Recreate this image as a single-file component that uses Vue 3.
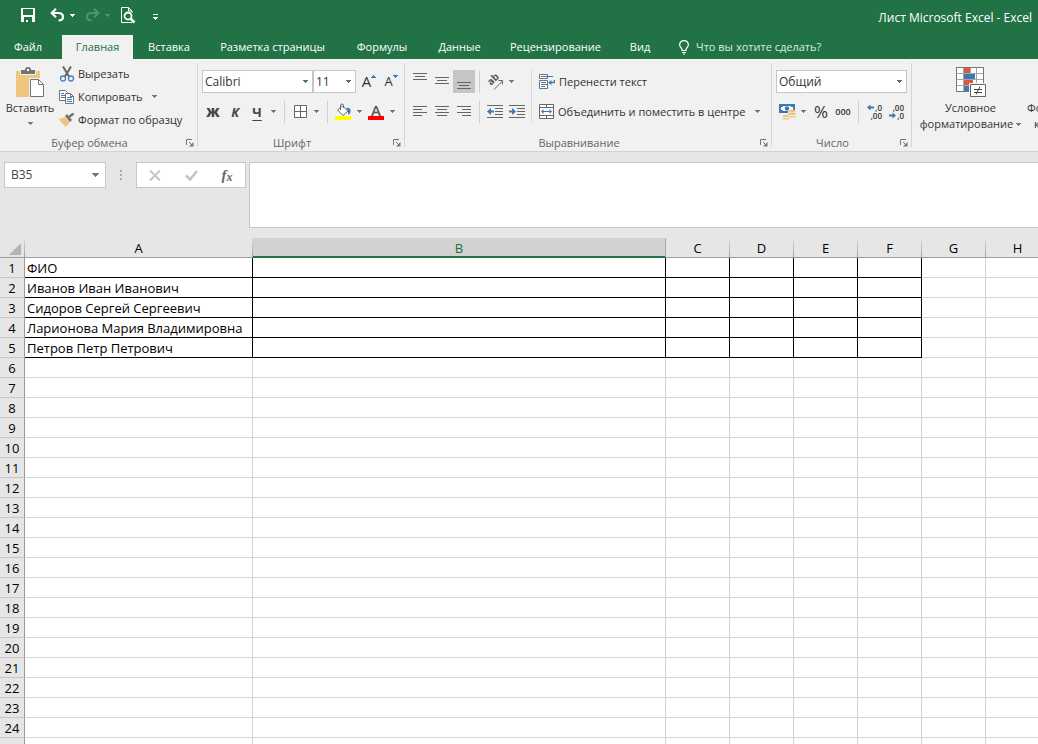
<script setup>
import { ref } from 'vue'

const tabs = ['Файл', 'Главная', 'Вставка', 'Разметка страницы', 'Формулы', 'Данные', 'Рецензирование', 'Вид']
const columns = ['A', 'B', 'C', 'D', 'E', 'F', 'G', 'H']
const names = ['ФИО', 'Иванов Иван Иванович', 'Сидоров Сергей Сергеевич', 'Ларионова Мария Владимировна', 'Петров Петр Петрович']
const caret = 'M0 0h5v1H4v1H3v1H2V2H1V1H0z'
const cellName = ref('B35')
const formula = ref('')
const activeTab = ref('Главная')
</script>

<template>
  <div class="app">
    <header class="top">
      <div class="titlebar">
        <div class="quick">
          <button class="q save" aria-label="Сохранить">
            <svg width="14" height="14" viewBox="0 0 14 14"><path d="M0 0h14v14H0z" fill="#fff" /><path d="M2 1h10v6H2zM3 9h8v5H7v-2H5v2H3z" fill="#217346" /></svg>
          </button>
          <button class="q undo" aria-label="Отменить">
            <svg width="15" height="14" viewBox="0 0 15 14"><path d="M1.500 5H8c3.500 0 5 1.800 5 3.800S11.500 12.500 8.500 12.500" fill="none" stroke="#fff" stroke-width="2.200" /><path d="M6 .8L1.700 5 6 9.200" fill="none" stroke="#fff" stroke-width="2.200" /></svg>
            <svg width="5" height="3"><path :d="caret" fill="#fff" /></svg>
          </button>
          <button class="q redo" aria-label="Повторить">
            <svg width="15" height="14" viewBox="0 0 15 14"><path d="M13.500 5H7C3.500 5 2 6.800 2 8.800s1.500 3.700 4.500 3.700" fill="none" stroke="#4f9370" stroke-width="2.200" /><path d="M9 .8L13.300 5 9 9.200" fill="none" stroke="#4f9370" stroke-width="2.200" /></svg>
            <svg width="5" height="3"><path :d="caret" fill="#4f9370" /></svg>
          </button>
          <button class="q preview" aria-label="Предварительный просмотр">
            <svg width="15" height="17" viewBox="0 0 15 17"><path d="M11 15.500H.5V.5h7L11 4v2M7.500.5V4H11" fill="none" stroke="#fff" /><circle cx="7" cy="9" r="3.500" fill="#217346" stroke="#fff" stroke-width="1.800" /><path d="M9.500 11.500l4 4" stroke="#fff" stroke-width="2.500" /></svg>
          </button>
          <button class="q more" aria-label="Настройка панели">
            <svg width="5" height="6"><path d="M0 0h5v1H0zM0 3h5v1H4v1H3v1H2V5H1V4H0z" fill="#fff" /></svg>
          </button>
        </div>
        <div class="title">Лист Microsoft Excel - Excel</div>
      </div>
      <nav class="tabs">
        <button v-for="t in tabs" :key="t" class="tab" :class="{ active: t === activeTab }" @click="activeTab = t">{{ t }}</button>
        <button class="tellme">
          <svg width="10" height="15" viewBox="0 0 10 15"><path d="M3 10.500V9.200C2.500 8 .6 7 .6 4.800A4.300 4.300 0 0 1 5 .6a4.300 4.300 0 0 1 4.400 4.200C9.400 7 7.500 8 7 9.200v1.300z" fill="none" stroke="#fff" stroke-width="1.200" /><path d="M3 12h4v1H3zM4 13.500h2v1H4z" fill="#fff" /></svg>
          Что вы хотите сделать?
        </button>
      </nav>
    </header>

    <section class="ribbon">
      <div class="group clipboard">
        <div class="body">
          <button class="big paste">
            <svg width="30" height="31" viewBox="0 0 30 31"><path d="M1 4h24v26H1z" fill="#eec77f" /><path d="M5 2.500h4a4 2.500 0 0 1 8 0h4V8H5z" fill="#f1f1f1" /><path d="M6 3h4a3 3 0 0 1 6 0h4v4H6z" fill="#737373" /><path d="M12 2h2v2h-2z" fill="#fff" /><path d="M14 11h10l6 6v14H14z" fill="#f1f1f1" /><path d="M15.500 12.500h8l5 5v12h-13z" fill="#fff" stroke="#737373" /><path d="M23.500 12.500v5h5" fill="none" stroke="#737373" /></svg>
            <span>Вставить</span>
            <svg class="caret" width="5" height="3"><path :d="caret" fill="#777" /></svg>
          </button>
          <div class="stack">
            <button>
              <svg width="16" height="16" viewBox="0 0 16 16"><path d="M4 .5l6 10M12 .5L6 10.500" stroke="#666" stroke-width="2" /><circle cx="4" cy="12.500" r="2.500" fill="none" stroke="#4a7fb8" stroke-width="1.300" /><circle cx="12" cy="12.500" r="2.500" fill="none" stroke="#4a7fb8" stroke-width="1.300" /></svg>
              Вырезать
            </button>
            <button>
              <svg width="16" height="14" viewBox="0 0 16 14"><path d="M.5.500h6l2 2v8h-8z" fill="#fff" stroke="#737373" /><path d="M2 3.500h3M2 5.500h4M2 7.500h4" stroke="#3e78b5" /><path d="M6.500 3.500h5l3 3v7h-8z" fill="#fff" stroke="#737373" /><path d="M11.500 3.500v3h3" fill="none" stroke="#737373" /><path d="M8 7.500h5M8 9.500h5M8 11.500h5" stroke="#3e78b5" /></svg>
              Копировать
              <svg class="caret" width="5" height="3"><path :d="caret" fill="#777" /></svg>
            </button>
            <button>
              <svg width="16" height="14" viewBox="0 0 16 14"><path d="M0 6l6-2 5 5-4 5C5 12 2 10 0 6z" fill="#eec77f" /><path d="M6 3l2-2 5 6-2 2z" fill="#737373" /><path d="M10 4l4.500-3.500" stroke="#737373" stroke-width="2.500" /></svg>
              Формат по образцу
            </button>
          </div>
        </div>
        <div class="caption">Буфер обмена</div>
        <button class="launch" aria-label="Параметры буфера"><svg width="8" height="8" viewBox="0 0 8 8"><path d="M.5 6V.5H6M3 3l3 3" fill="none" stroke="#777" /><path d="M7.500 3v4.500H3z" fill="#777" /></svg></button>
      </div>

      <div class="group font">
        <div class="body rows">
          <div class="row">
            <div class="combo family"><select aria-label="Шрифт"><option>Calibri</option></select><svg class="caret" width="5" height="3"><path :d="caret" fill="#666" /></svg></div>
            <div class="combo size"><select aria-label="Размер"><option>11</option></select><svg class="caret" width="5" height="3"><path :d="caret" fill="#666" /></svg></div>
            <button class="tool grow" aria-label="Увеличить размер"><span>A</span><svg width="5" height="3"><path d="M2 0h1v1h1v1h1v1H0V2h1V1h1z" fill="#3e78b5" /></svg></button>
            <button class="tool grow shrink" aria-label="Уменьшить размер"><span>A</span><svg width="5" height="3"><path :d="caret" fill="#3e78b5" /></svg></button>
          </div>
          <div class="row">
            <button class="tool bold">Ж</button>
            <button class="tool italic">К</button>
            <button class="tool under">Ч</button>
            <button class="drop" aria-label="Вид подчеркивания"><svg width="5" height="3"><path :d="caret" fill="#777" /></svg></button>
            <i class="sep"></i>
            <button class="tool" aria-label="Границы"><svg width="13" height="13" viewBox="0 0 13 13"><path d="M.5.500h12v12H.5zM6.500 1v11M1 6.500h11" fill="#fff" stroke="#666" /></svg></button>
            <button class="drop" aria-label="Вид границ"><svg width="5" height="3"><path :d="caret" fill="#777" /></svg></button>
            <i class="sep"></i>
            <button class="tool" aria-label="Цвет заливки"><svg width="16" height="17" viewBox="0 0 16 17"><path d="M7.500 3l5.500 5-5 4.500L2.500 7z" fill="#fff" stroke="#666" /><path d="M5.500 7V2.500a1.500 1.500 0 0 1 3 0V5" fill="none" stroke="#666" /><path d="M11 5c3-1 5 1 4.500 3.500S13.500 12 13 11V7z" fill="#3e78b5" /><path d="M0 13h16v4H0z" fill="#ff0" /></svg></button>
            <button class="drop" aria-label="Выбор заливки"><svg width="5" height="3"><path :d="caret" fill="#777" /></svg></button>
            <button class="tool color" aria-label="Цвет текста"><span>A</span></button>
            <button class="drop" aria-label="Выбор цвета"><svg width="5" height="3"><path :d="caret" fill="#777" /></svg></button>
          </div>
        </div>
        <div class="caption">Шрифт</div>
        <button class="launch" aria-label="Параметры шрифта"><svg width="8" height="8" viewBox="0 0 8 8"><path d="M.5 6V.5H6M3 3l3 3" fill="none" stroke="#777" /><path d="M7.500 3v4.500H3z" fill="#777" /></svg></button>
      </div>

      <div class="group align">
        <div class="body">
          <div class="rows">
            <div class="row">
              <button class="tool" aria-label="По верхнему краю"><svg width="14" height="17" viewBox="0 0 14 17"><path d="M0 .5h14M2 3.500h10M0 6.500h14" stroke="#666" /></svg></button>
              <button class="tool" aria-label="По середине"><svg width="14" height="17" viewBox="0 0 14 17"><path d="M0 4.500h14M2 7.500h10M0 10.500h14" stroke="#666" /></svg></button>
              <button class="tool pressed" aria-label="По нижнему краю"><svg width="14" height="17" viewBox="0 0 14 17"><path d="M0 9.500h14M2 12.500h10M0 15.500h14" stroke="#666" /></svg></button>
              <i class="sep near"></i>
              <button class="tool" aria-label="Ориентация"><svg class="orient" width="17" height="16" viewBox="0 0 17 16"><text x="0" y="0" transform="translate(4 12) rotate(-45)" class="ab">ab</text><path d="M7 15.500l8.500-8.500M11.500 6.500h4v4" fill="none" stroke="#666" /></svg></button>
              <button class="drop" aria-label="Выбор ориентации"><svg width="5" height="3"><path :d="caret" fill="#777" /></svg></button>
            </div>
            <div class="row">
              <button class="tool" aria-label="По левому краю"><svg width="14" height="11" viewBox="0 0 14 11"><path d="M0 .5h14M0 3.500h9M0 6.500h14M0 9.500h9" stroke="#666" /></svg></button>
              <button class="tool" aria-label="По центру"><svg width="14" height="11" viewBox="0 0 14 11"><path d="M0 .5h14M2 3.500h10M0 6.500h14M2 9.500h10" stroke="#666" /></svg></button>
              <button class="tool" aria-label="По правому краю"><svg width="14" height="11" viewBox="0 0 14 11"><path d="M0 .5h14M5 3.500h9M0 6.500h14M5 9.500h9" stroke="#666" /></svg></button>
              <i class="sep near"></i>
              <button class="tool" aria-label="Уменьшить отступ"><svg width="16" height="13" viewBox="0 0 16 13"><path d="M0 .5h16M8 3.500h8M8 6.500h8M8 9.500h8M0 12.500h16" stroke="#666" /><path d="M0 6.500L4 3v2.500h3v2H4V10z" fill="#3e78b5" /></svg></button>
              <button class="tool" aria-label="Увеличить отступ"><svg width="16" height="13" viewBox="0 0 16 13"><path d="M0 .5h16M8 3.500h8M8 6.500h8M8 9.500h8M0 12.500h16" stroke="#666" /><path d="M7 6.500L3 3v2.500H0v2h3V10z" fill="#3e78b5" /></svg></button>
            </div>
          </div>
          <div class="rows wide">
            <button class="row">
              <svg width="16" height="15" viewBox="0 0 16 15"><path d="M.5.500h8v4h-8zM.5 6.500h8v8h-8z" fill="#fff" stroke="#737373" /><path d="M2 2.500h12M2 8.500h5M2 10.500h6M2 12.500h4" stroke="#3e78b5" /><path d="M15.500 6v2.500h-4" fill="none" stroke="#3e78b5" stroke-width="1.500" /><path d="M9 8.500L12.500 6v5z" fill="#3e78b5" /></svg>
              Перенести текст
            </button>
            <button class="row">
              <svg width="15" height="15" viewBox="0 0 15 15"><path d="M.5.500h14v14H.5zM.5 3.500h14M.5 11.500h14M7.500 0v3M7.500 12v3" fill="#fff" stroke="#666" /><path d="M3 7.500h9" stroke="#3e78b5" /><path d="M2 7.500L4.500 5v5zM13 7.500L10.500 5v5z" fill="#3e78b5" /></svg>
              Объединить и поместить в центре
              <svg class="caret" width="5" height="3"><path :d="caret" fill="#777" /></svg>
            </button>
          </div>
        </div>
        <div class="caption">Выравнивание</div>
        <button class="launch" aria-label="Параметры выравнивания"><svg width="8" height="8" viewBox="0 0 8 8"><path d="M.5 6V.5H6M3 3l3 3" fill="none" stroke="#777" /><path d="M7.500 3v4.500H3z" fill="#777" /></svg></button>
      </div>

      <div class="group number">
        <div class="body rows">
          <div class="row">
            <div class="combo format"><select aria-label="Числовой формат"><option>Общий</option></select><svg class="caret" width="5" height="3"><path :d="caret" fill="#666" /></svg></div>
          </div>
          <div class="row">
            <button class="tool" aria-label="Финансовый формат"><svg width="17" height="17" viewBox="0 0 17 17"><path d="M0 1h16v9H0z" fill="#3e78b5" /><path d="M2 3h12v5H2z" fill="#fff" /><path d="M2 3h2v1H2zM12 3h2v1h-2zM2 7h2v1H2z" fill="#3e78b5" /><circle cx="8" cy="5.500" r="2.200" fill="#3e78b5" /><path d="M9 7h8v9H9zM3 11h7v6H3z" fill="#f1f1f1" /><g fill="#eec77f"><ellipse cx="13" cy="8" rx="3.500" ry="1.500" /><path d="M9.500 10h7v2h-7zM10.500 13h6v1.500h-6zM4 12h6v2H4zM4 15h6v1.500H4z" /></g></svg></button>
            <button class="drop" aria-label="Выбор валюты"><svg width="5" height="3"><path :d="caret" fill="#777" /></svg></button>
            <button class="tool percent">%</button>
            <button class="tool thousands">000</button>
            <i class="sep"></i>
            <button class="tool decimals" aria-label="Увеличить разрядность">
              <span><svg width="8" height="7" viewBox="0 0 8 7"><path d="M0 3.500L3.500.5v2H7v2H3.500v2z" fill="#3e78b5" /></svg>,0</span>
              <span>,00</span>
            </button>
            <button class="tool decimals" aria-label="Уменьшить разрядность">
              <span>,00</span>
              <span><svg width="8" height="7" viewBox="0 0 8 7"><path d="M7 3.500L3.500.5v2H0v2h3.500v2z" fill="#3e78b5" /></svg>,0</span>
            </button>
          </div>
        </div>
        <div class="caption">Число</div>
        <button class="launch" aria-label="Параметры числа"><svg width="8" height="8" viewBox="0 0 8 8"><path d="M.5 6V.5H6M3 3l3 3" fill="none" stroke="#777" /><path d="M7.500 3v4.500H3z" fill="#777" /></svg></button>
      </div>

      <div class="group styles">
        <button class="big cond">
          <svg width="30" height="31" viewBox="0 0 30 31"><path d="M.5.500h27v24H.5z" fill="#fff" /><path d="M.5.500h27v24H.5zM.5 6.500h27M.5 12.500h27M.5 18.500h27M7.500.500v24M14.500.500v24M20.500.500v24" fill="none" stroke="#a6a6a6" /><path d="M8 1h6v5H8zM8 13h9v5H8z" fill="#d9593a" /><path d="M8 7h11v5H8zM8 19h5v5H8z" fill="#3e78b5" /><path d="M.5.500h27v24H.5z" fill="none" stroke="#777" /><path d="M13 16h17v15H13z" fill="#f1f1f1" /><path d="M14.500 17.500h15v12h-15z" fill="#fff" stroke="#666" /><path d="M18 22.500h8M18 25.500h8M24 19.500l-4 8" stroke="#444" /></svg>
          <span>Условное</span>
          <span class="inline">форматирование <svg width="5" height="3"><path :d="caret" fill="#777" /></svg></span>
        </button>
        <button class="big astable"><span>Форматировать</span><span class="inline">как таблицу <svg width="5" height="3"><path :d="caret" fill="#777" /></svg></span></button>
      </div>
    </section>

    <section class="formulabar">
      <div class="namebox"><input v-model="cellName" aria-label="Имя ячейки"><button aria-label="Список имён"><svg width="7" height="4"><path d="M0 0h7v1H6v1H5v1H4v1H3V3H2V2H1V1H0z" fill="#777" /></svg></button></div>
      <svg class="dots" width="2" height="11"><path d="M0 0h2v2H0zM0 4h2v2H0zM0 8h2v2H0z" fill="#aaa" /></svg>
      <div class="fxbox">
        <button aria-label="Отмена"><svg width="12" height="11" viewBox="0 0 12 11"><path d="M1 .5l10 10M11 .5L1 10.500" stroke="#c4c4c4" stroke-width="2" /></svg></button>
        <button aria-label="Ввод"><svg width="13" height="11" viewBox="0 0 13 11"><path d="M1 5.500l4 4L12 1" fill="none" stroke="#c4c4c4" stroke-width="2.500" /></svg></button>
        <button class="fx" aria-label="Вставить функцию">f<small>x</small></button>
      </div>
      <textarea v-model="formula" aria-label="Строка формул"></textarea>
    </section>

    <main class="sheet">
      <table>
        <colgroup><col class="c-num"><col class="c-a"><col class="c-b"><col v-for="n in 6" :key="n" class="c-n"></colgroup>
        <thead>
          <tr><th class="corner"><svg width="12" height="12"><path d="M12 0v12H0z" fill="#b4b4b4" /></svg></th><th v-for="c in columns" :key="c" :class="{ sel: c === 'B' }">{{ c }}</th></tr>
        </thead>
        <tbody>
          <tr v-for="r in 25" :key="r">
            <th>{{ r }}</th>
            <td v-for="(c, i) in columns" :key="c" :class="{ framed: r <= 5 && i < 6 }">{{ i === 0 ? names[r - 1] : '' }}</td>
          </tr>
        </tbody>
      </table>
    </main>
  </div>
</template>

<style>
body { margin: 0; overflow: hidden; }
</style>

<style scoped>
* { box-sizing: border-box; }
.app { height: 100vh; overflow: hidden; display: flex; flex-direction: column; background: #e6e6e6; font: 11px/16px "Open Sans", "Noto Sans", sans-serif; color: #333; }
button { border: 0; padding: 0; margin: 0; background: none; font: inherit; color: inherit; white-space: nowrap; flex-shrink: 0; }
svg { display: block; flex-shrink: 0; }
.top { background: #217346; color: #fff; }
.titlebar { height: 35px; display: flex; justify-content: space-between; }
.quick { display: flex; align-items: center; padding: 0 0 5px 21px; }
.q { display: flex; align-items: center; gap: 5px; }
.undo { margin-left: 15px; }
.redo { margin-left: 10px; }
.preview { margin-left: 11px; }
.more { margin-left: 17px; padding-top: 3px; }
.title { padding: 10px 6px 0 0; font-size: 12px; }
.tabs { height: 24px; display: grid; grid-template-columns: 62px 71px 72px 135px 84px 71px 121px 48px 1fr; }
.tab { text-align: center; }
.tab:first-child { padding-right: 6px; }
.tab.active { background: #f1f1f1; color: #217346; }
.tellme { display: flex; align-items: center; gap: 7px; padding-left: 15px; color: #d9ebe1; }

.ribbon { height: 93px; display: flex; background: #f1f1f1; border-bottom: 1px solid #d2d2d2; padding-top: 4px; overflow: hidden; flex-shrink: 0; }
.group { position: relative; height: 84px; flex-shrink: 0; border-right: 1px solid #d5d5d5; display: flex; flex-direction: column; }
.clipboard { width: 198px; }
.font { width: 207px; }
.align { width: 367px; }
.number { width: 140px; }
.styles { flex: 1 0 126px; flex-direction: row; border: 0; }
.body { display: flex; height: 72px; flex-shrink: 0; }
.caption { text-align: center; color: #666; padding: 1px 18px 0 0; line-height: 14px; }
.launch { position: absolute; right: 3px; bottom: 0; }
.big { display: flex; flex-direction: column; align-items: center; }
.paste { width: 58px; padding: 4px 0 0 2px; }
.paste span { margin-top: 2px; }
.paste .caret { margin-top: 6px; }
.stack { display: flex; flex-direction: column; }
.stack button { height: 23px; display: flex; align-items: center; gap: 3px; padding: 0 0 2px 1px; }
.stack .caret { margin-left: 6px; }
.rows { display: flex; flex-direction: column; gap: 7px; padding: 7px 0 0 4px; }
.row { display: flex; align-items: center; height: 23px; }
.combo { position: relative; height: 23px; border: 1px solid #c6c6c6; background: #fff; }
.combo select { appearance: none; width: 100%; height: 21px; border: 0; padding: 0 2px; background: none; font: inherit; font-size: 12px; color: #333; }
.combo .caret { position: absolute; right: 4px; top: 9px; pointer-events: none; }
.family { width: 111px; }
.size { width: 43px; }
.format { width: 131px; }
.tool { width: 22px; height: 23px; display: flex; align-items: center; justify-content: center; }
.drop { width: 11px; height: 23px; display: flex; align-items: center; justify-content: center; }
.sep { width: 1px; height: 22px; background: #d0d0d0; margin: 0 4px 0 5px; }
.sep.near { margin: 0 4px; }
.grow { align-items: flex-start; font-size: 15px; padding-top: 3px; margin-left: 2px; }
.grow svg { margin-top: 2px; }
.shrink { font-size: 13px; margin-left: 0; }
.bold { font-weight: 800; font-size: 13px; color: #444; }
.italic { font-weight: 700; font-style: italic; font-size: 13px; color: #444; }
.under { font-weight: 700; font-size: 13px; color: #444; text-decoration: underline; text-decoration-thickness: 1px; text-underline-offset: 3px; }
.color span { width: 16px; height: 17px; line-height: 14px; font-size: 15px; font-weight: 600; color: #555; border-bottom: 4px solid #f00; }
.pressed { background: #c5c5c5; }
.orient { overflow: visible; }
.ab { font: 700 10px "Open Sans", sans-serif; fill: #555; }
.wide { margin: 0 0 0 3px; padding-left: 8px; position: relative; }
.wide::before { content: ""; position: absolute; left: 0; top: 6px; width: 1px; height: 54px; background: #d8d8d8; }
.wide .row { gap: 4px; }
.wide .caret { margin-left: 6px; }
.percent { font-size: 17px; margin-left: 1px; }
.thousands { font-size: 9px; font-weight: 600; }
.number .sep { margin-left: 4px; }
.decimals { flex-direction: column; align-items: center; font: 600 8px/8px "Open Sans", sans-serif; }
.decimals span { display: flex; align-items: center; justify-content: flex-end; width: 16px; height: 8px; }
.cond { width: 116px; padding: 4px 0 0 1px; }
.cond span { margin-top: 2px; }
.cond span + span { margin-top: 0; }
.inline { display: flex; align-items: center; gap: 3px; }
.astable { padding-top: 37px; margin-left: -1px; }

.formulabar { height: 86px; flex-shrink: 0; display: flex; align-items: flex-start; padding: 10px 0 0 4px; }
.namebox { width: 102px; height: 26px; display: flex; background: #fff; border: 1px solid #c6c6c6; flex-shrink: 0; }
.namebox input { flex: 1; min-width: 0; border: 0; background: none; padding: 0 6px; font: inherit; font-size: 12px; color: #444; outline: 0; }
.namebox button { width: 19px; display: flex; align-items: center; justify-content: center; }
.dots { margin: 8px 14px 0 14px; }
.fxbox { width: 110px; height: 26px; display: flex; background: #fff; border: 1px solid #c6c6c6; flex-shrink: 0; }
.fxbox button { flex: 1; display: flex; align-items: center; justify-content: center; }
.fxbox .fx { font: italic 700 15px/16px "Liberation Serif", serif; color: #666; }
.fx small { font-size: 12px; padding-top: 3px; }
textarea { flex: 1; height: 66px; margin-left: 3px; border: 1px solid #c6c6c6; border-right: 0; background: #fff; resize: none; outline: 0; padding: 4px; font: inherit; }

.sheet { flex: 1; min-height: 0; overflow: hidden; background: #fff; }
table { table-layout: fixed; width: 1050px; border-collapse: separate; border-spacing: 0; font: 13px/17px "Open Sans", "Noto Sans", sans-serif; color: #000; }
.c-num { width: 25px; }
.c-a { width: 228px; }
.c-b { width: 413px; }
.c-n { width: 64px; }
th, td { height: 20px; padding: 2px 0 0; white-space: nowrap; overflow: hidden; }
th { font-weight: 400; background: #e6e6e6; border-right: 1px solid #9b9b9b; border-bottom: 1px solid #c6c6c6; }
thead th { border-bottom-color: #9b9b9b; border-image: linear-gradient(#e0e0e0, #9b9b9b) 1; }
thead th.sel { background: #d2d2d2; color: #217346; border-image: none; border-right-color: #ababab; border-bottom: 2px solid #217346; line-height: 16px; }
.corner svg { margin: 1px 0 0 9px; }
td { background: #fff; border-right: 1px solid #d4d4d4; border-bottom: 1px solid #d4d4d4; padding-left: 2px; text-align: left; }
td.framed { border-color: #000; }
</style>
